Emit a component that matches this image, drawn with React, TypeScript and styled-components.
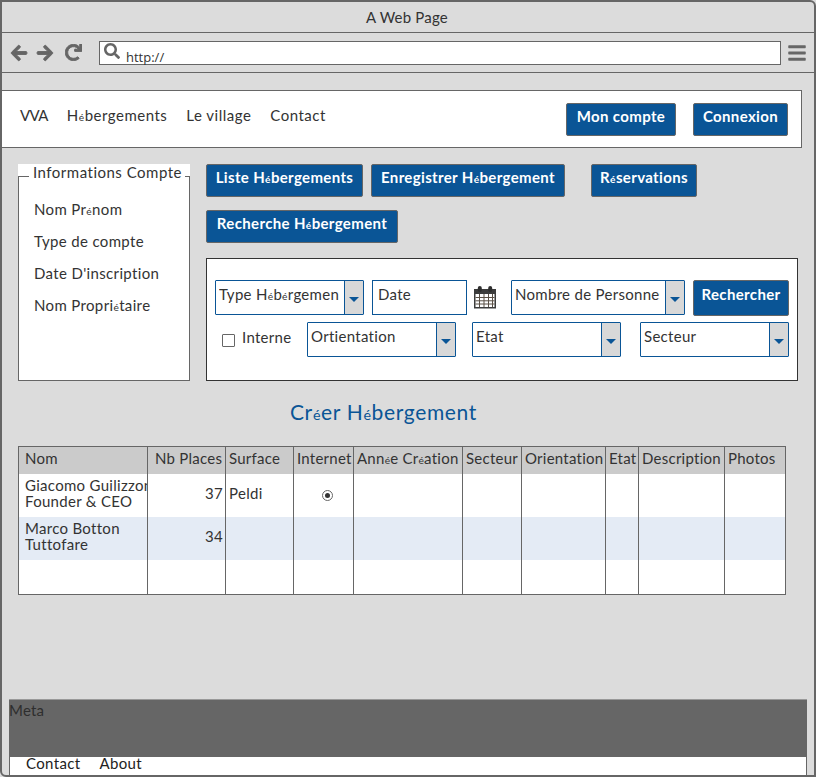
import React from "react";
import styled, { createGlobalStyle } from "styled-components";
import { FaArrowLeft, FaArrowRight, FaRedo, FaSearch, FaBars } from "react-icons/fa";

const Global = createGlobalStyle`
  html, body { margin: 0; padding: 0; background: #dcdcdc; }
  * { box-sizing: border-box; }
  body { font-family: "Lato", "Open Sans", sans-serif; color: #333; }
`;

const Win = styled.div`
  width: 816px; height: 777px; background: #dcdcdc;
  border: 2px solid #666; border-radius: 0 6px 0 6px;
  display: flex; flex-direction: column; overflow: hidden;
`;
const TitleBar = styled.div`
  height: 31px; flex: none; border-bottom: 1px solid #666;
  display: flex; align-items: center; justify-content: center;
  font-size: 15px; letter-spacing: .2px; color: #333; padding-right: 2px;
`;
const Toolbar = styled.div`
  height: 40px; flex: none; border-bottom: 1px solid #666;
  display: flex; align-items: center; padding: 0 7px 0 8px; color: #666;
`;
const NavIcon = styled.span<{ $gap: number; $size?: number }>`
  display: flex; margin-right: ${p => p.$gap}px; font-size: ${p => p.$size ?? 18}px;
  svg { stroke: currentColor; stroke-width: 28; }
`;
const Address = styled.div`
  width: 682px; height: 24px; background: #fff; border: 1px solid #666;
  display: flex; align-items: center; padding-left: 4px; margin-left: 17px;
  color: #666;
`;
const SearchGlyph = styled.span`display: flex; font-size: 16px; margin-top: -4px;`;
const Url = styled.span`
  font-family: "Open Sans", sans-serif; font-size: 13px; color: #333; margin: 8px 0 0 6px;
`;
const Menu = styled.span`
  display: flex; margin-left: 6px; font-size: 20px; color: #666;
`;
const NavBar = styled.nav`
  margin-top: 17px; width: 800px; height: 58px; background: #fff;
  border: 1px solid #666; border-left: none;
  display: flex; align-items: center; justify-content: space-between;
  padding: 0 13px 0 18px;
`;
const NavLinks = styled.div`
  display: flex; gap: 19px; font-size: 15px; color: #333; margin-top: -8px; letter-spacing: .5px;
`;
const Brand = styled.span`letter-spacing: -.6px;`;
const NavGroup = styled.div`display: flex; gap: 17px;`;
const Btn = styled.div<{ $w: number; $h?: number }>`
  width: ${p => p.$w}px; height: ${p => p.$h ?? 33}px; flex: none;
  background: #0a5596; color: #fff; border: 1px solid #666; border-radius: 2px;
  padding-top: ${p => (p.$h ? 3 : 2)}px; text-align: center; line-height: 20px;
  font-size: 15px; font-weight: 700; letter-spacing: .35px; white-space: nowrap;
`;
const Accent = styled.span`font-size: .68em; line-height: 0;`;
const Main = styled.div`
  display: flex; padding: 16px 0 0 16px; gap: 16px;
`;
const Side = styled.aside`
  width: 172px; height: 217px; flex: none; background: #fff; position: relative; padding-top: 12px;
`;
const SideFrame = styled.div`
  height: 205px; border: 1px solid #666; padding: 23px 0 0 15px;
  display: flex; flex-direction: column; gap: 14px;
  font-size: 15px; letter-spacing: .35px; color: #333; line-height: 18px;
`;
const Legend = styled.span`
  position: absolute; top: 0; left: 11px; width: 156px; background: #fff; padding-left: 4px;
  font-size: 15px; letter-spacing: .5px; line-height: 17px; white-space: nowrap; color: #333;
`;
const Right = styled.div`width: 592px; flex: none;`;
const Tabs = styled.div`display: flex; flex-direction: column; row-gap: 13px;`;
const TabRow = styled.div`display: flex;`;
const TabSlot = styled.div<{ $ml: number }>`margin-left: ${p => p.$ml}px;`;
const Search = styled.div`
  margin-top: 15px; height: 123px; background: #fff; border: 1px solid #333;
  padding: 21px 8px 0 8px; display: flex; flex-direction: column; gap: 6px;
`;
const SearchRow = styled.div`display: flex; align-items: flex-start;`;
const Select = styled.div<{ $w: number; $ml?: number }>`
  width: ${p => p.$w}px; height: 35px; margin-left: ${p => p.$ml ?? 0}px; flex: none;
  display: flex; border: 1px solid #0a5596; background: #fff; border-radius: 1px;
`;
const SelectText = styled.div`
  flex: 1; overflow: hidden; white-space: nowrap; margin: 4px 5px 0 3px; height: 20px;
  font-size: 15px; letter-spacing: .3px; color: #333; line-height: 18px;
`;
const Arrow = styled.div`
  width: 19px; flex: none; background: #d8d8d8; border-left: 1px solid #0a5596;
  display: flex; align-items: center; justify-content: center;
  &::after {
    content: ""; margin-top: 3px; border-left: 5px solid transparent; border-right: 5px solid transparent;
    border-top: 5px solid #0a5596;
  }
`;
const DateBox = styled.div`
  width: 95px; height: 35px; margin-left: 8px; flex: none; border: 1px solid #0a5596;
  padding: 4px 0 0 5px; font-size: 15px; letter-spacing: .3px; line-height: 18px; color: #333;
`;
const CalWrap = styled.span`display: flex; width: 24px; margin: 5px 14px 0 6px; flex: none;`;
const Check = styled.span`
  width: 13px; height: 13px; border: 1px solid #666; background: #fff; flex: none;
  margin: 12px 0 0 7px; border-radius: 1px;
`;
const CheckLabel = styled.span`
  font-size: 15px; letter-spacing: .3px; color: #333; margin: 6px 16px 0 7px; line-height: 18px; width: 49px; flex: none;
`;
const Heading = styled.h2`
  margin: 18px 0 21px 0; padding-left: 288px; height: 26px; line-height: 26px;
  font-size: 21px; font-weight: 400; color: #0a5596; letter-spacing: .65px;
`;
const Table = styled.table`
  margin: 0 0 0 16px; width: 768px; border-collapse: collapse; table-layout: fixed;
  border: 1px solid #666; background: #fff; font-size: 15px; color: #333;
`;
const Th = styled.th<{ $w: number; $pad?: number }>`
  width: ${p => p.$w}px; height: 27px; background: #cbcbcb; font-weight: 400; text-align: left;
  padding: 0 0 4px ${p => p.$pad ?? 3}px; border-left: 1px solid #666; white-space: nowrap; overflow: hidden;
  letter-spacing: .25px;
  &:first-child { border-left: none; }
`;
const Row = styled.tr<{ $h: number; $alt?: boolean }>`
  height: ${p => p.$h}px; background: ${p => (p.$alt ? "#e4ebf5" : "#fff")};
`;
const Td = styled.td<{ $right?: boolean; $center?: boolean }>`
  border-left: 1px solid #666; padding: 0 2px 5px ${p => (p.$center ? 10 : 3)}px; letter-spacing: .3px;
  text-align: ${p => (p.$right ? "right" : p.$center ? "center" : "left")};
  &:first-child { border-left: none; }
`;
const NameCell = styled(Td)`
  padding: 0 0 5px 6px; line-height: 16px; white-space: nowrap; overflow: hidden;
`;
const Radio = styled.span`
  display: inline-block; width: 11px; height: 11px; border-radius: 50%; border: 1px solid #666;
  background: #fff; position: relative; vertical-align: middle; margin-top: 2px;
  &::after {
    content: ""; position: absolute; inset: 2px; border-radius: 50%; background: #333;
  }
`;
const Footer = styled.footer`
  margin: auto 0 0 7px; width: 798px; flex: none;
`;
const Meta = styled.div`
  height: 58px; background: #666; border-top: 1px solid #999; font-size: 15px; color: #2e2e2e;
  line-height: 21px; letter-spacing: .2px;
`;
const FootLinks = styled.div`
  height: 18px; background: #fff; display: flex; gap: 19px; padding-left: 16px;
  border-left: 1px solid #666; border-right: 1px solid #666;
  font-size: 15px; line-height: 13px; color: #222; letter-spacing: .35px;
`;

const Hb = ({ t = "bergement" }: { t?: string }) => (
  <>H<Accent>é</Accent>{t}</>
);

const Calendar = () => (
  <svg width="24" height="24" viewBox="0 0 24 24">
    <path d="M1 4h22v19.5H1z" fill="#3c3c3c" />
    <path d="M2.5 9h19v13h-19z" fill="#fff" />
    <path d="M2.5 12.5h19M2.5 15.8h19M2.5 19h19M6.5 9v13M11 9v13M15.5 9v13M19.5 9v13" stroke="#5a5046" strokeWidth="1" />
    <rect x="4.8" y="1" width="4" height="6" rx="2" fill="#2e2e2e" />
    <rect x="15.2" y="1" width="4" height="6" rx="2" fill="#2e2e2e" />
  </svg>
);

const cols = [129, 78, 68, 60, 109, 59, 84, 33, 86, 61];

export default function App() {
  return (
    <>
      <Global />
      <Win>
        <TitleBar>A Web Page</TitleBar>
        <Toolbar>
          <NavIcon $gap={8}><FaArrowLeft /></NavIcon>
          <NavIcon $gap={11}><FaArrowRight /></NavIcon>
          <NavIcon $gap={0} $size={17}><FaRedo /></NavIcon>
          <Address>
            <SearchGlyph><FaSearch /></SearchGlyph>
            <Url>http://</Url>
          </Address>
          <Menu><FaBars /></Menu>
        </Toolbar>
        <NavBar>
          <NavLinks>
            <Brand>VVA</Brand>
            <span><Hb t="bergements" /></span>
            <span>Le village</span>
            <span>Contact</span>
          </NavLinks>
          <NavGroup>
            <Btn $w={110}>Mon compte</Btn>
            <Btn $w={95}>Connexion</Btn>
          </NavGroup>
        </NavBar>
        <Main>
          <Side>
            <Legend>Informations Compte</Legend>
            <SideFrame>
              <span>Nom Pr<Accent>é</Accent>nom</span>
              <span>Type de compte</span>
              <span>Date D'inscription</span>
              <span>Nom Propri<Accent>é</Accent>taire</span>
            </SideFrame>
          </Side>
          <Right>
            <Tabs>
              <TabRow>
                <TabSlot $ml={0}><Btn $w={157}>Liste <Hb t="bergements" /></Btn></TabSlot>
                <TabSlot $ml={8}><Btn $w={194}>Enregistrer <Hb /></Btn></TabSlot>
                <TabSlot $ml={26}><Btn $w={106}>R<Accent>é</Accent>servations</Btn></TabSlot>
              </TabRow>
              <TabRow>
                <TabSlot $ml={0}><Btn $w={192}>Recherche <Hb /></Btn></TabSlot>
              </TabRow>
            </Tabs>
            <Search>
              <SearchRow>
                <Select $w={149}>
                  <SelectText>Type H<Accent>é</Accent>b<Accent>é</Accent>rgement</SelectText>
                  <Arrow />
                </Select>
                <DateBox>Date</DateBox>
                <CalWrap><Calendar /></CalWrap>
                <Select $w={174}>
                  <SelectText>Nombre de Personnes</SelectText>
                  <Arrow />
                </Select>
                <TabSlot $ml={8}><Btn $w={96} $h={36}>Rechercher</Btn></TabSlot>
              </SearchRow>
              <SearchRow>
                <Check />
                <CheckLabel>Interne</CheckLabel>
                <Select $w={149}>
                  <SelectText>Ortientation</SelectText>
                  <Arrow />
                </Select>
                <Select $w={149} $ml={16}>
                  <SelectText>Etat</SelectText>
                  <Arrow />
                </Select>
                <Select $w={149} $ml={19}>
                  <SelectText>Secteur</SelectText>
                  <Arrow />
                </Select>
              </SearchRow>
            </Search>
          </Right>
        </Main>
        <Heading>Cr<Accent>é</Accent>er <Hb /></Heading>
        <Table>
          <thead>
            <tr>
              <Th $w={cols[0]} $pad={6}>Nom</Th>
              <Th $w={cols[1]} $pad={7}>Nb Places</Th>
              <Th $w={cols[2]}>Surface</Th>
              <Th $w={cols[3]}>Internet</Th>
              <Th $w={cols[4]}>Ann<Accent>é</Accent>e Cr<Accent>é</Accent>ation</Th>
              <Th $w={cols[5]}>Secteur</Th>
              <Th $w={cols[6]}>Orientation</Th>
              <Th $w={cols[7]}>Etat</Th>
              <Th $w={cols[8]}>Description</Th>
              <Th $w={cols[9]}>Photos</Th>
            </tr>
          </thead>
          <tbody>
            <Row $h={43}>
              <NameCell>Giacomo Guilizzoni<br />Founder &amp; CEO</NameCell>
              <Td $right>37</Td>
              <Td>Peldi</Td>
              <Td $center><Radio /></Td>
              <Td /><Td /><Td /><Td /><Td /><Td />
            </Row>
            <Row $h={43} $alt>
              <NameCell>Marco Botton<br />Tuttofare</NameCell>
              <Td $right>34</Td>
              <Td /><Td /><Td /><Td /><Td /><Td /><Td /><Td />
            </Row>
            <Row $h={35}>
              <Td /><Td /><Td /><Td /><Td /><Td /><Td /><Td /><Td /><Td />
            </Row>
          </tbody>
        </Table>
        <Footer>
          <Meta>Meta</Meta>
          <FootLinks><span>Contact</span><span>About</span></FootLinks>
        </Footer>
      </Win>
    </>
  );
}
